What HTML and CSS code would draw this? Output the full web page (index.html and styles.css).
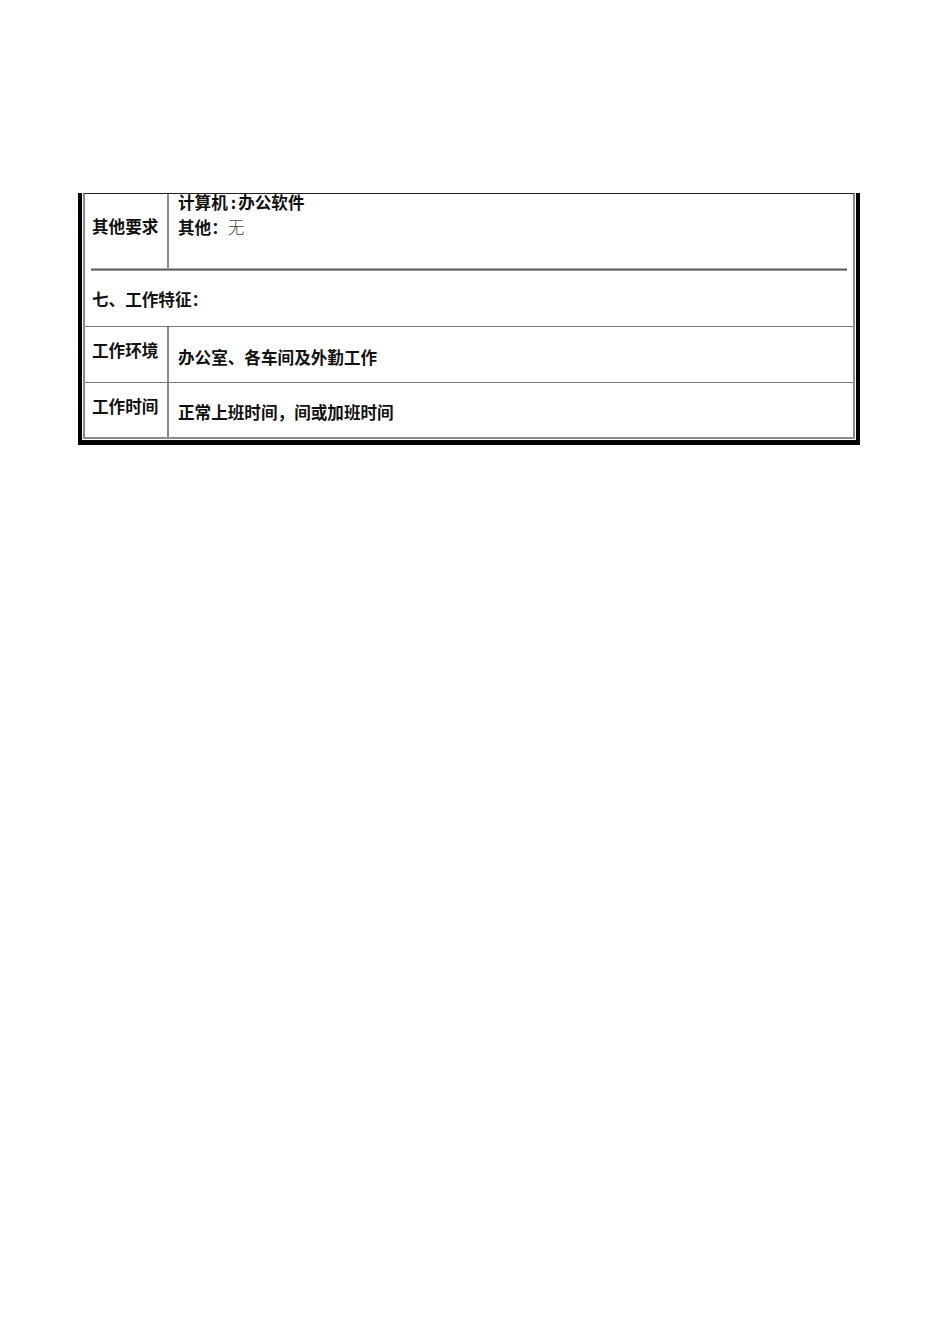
FILE: index.html
```html
<!DOCTYPE html>
<html lang="zh-CN">
<head>
<meta charset="utf-8">
<title>工作特征</title>
<link rel="stylesheet" href="styles.css">
</head>
<body>
<div class="page">
  <div class="frame">
    <div class="inner">
      <div class="row row-req">
        <div class="label label-req">其他要求</div>
        <div class="content content-req">
          <div class="lines">
            <div>计算机<span class="colon">:</span>办公软件</div>
            <div>其他：<span class="light">无</span></div>
          </div>
        </div>
      </div>
      <div class="sep"></div>
      <div class="row row-head">
        <div class="head">七、工作特征：</div>
      </div>
      <div class="row row-item">
        <div class="label">工作环境</div>
        <div class="content">办公室、各车间及外勤工作</div>
      </div>
      <div class="row row-item row-last">
        <div class="label">工作时间</div>
        <div class="content">正常上班时间，间或加班时间</div>
      </div>
    </div>
  </div>
</div>
</body>
</html>
```

FILE: styles.css
```css
html, body {
  margin: 0;
  padding: 0;
  background: #ffffff;
}

body {
  font-family: "Noto Sans CJK SC", "Noto Sans", sans-serif;
  font-size: 16.6px;
  color: #111111;
  font-weight: 600;
}

.page {
  padding-top: 192px;
  padding-left: 78px;
}

.frame {
  width: 772px;
  border-left: 4px solid #000000;
  border-right: 4px solid #000000;
  border-bottom: 5px solid #000000;
  padding: 0 1px 1px 1px;
}

.inner {
  border-top: 1px solid #222222;
  border-left: 2px solid #8a8a8a;
  border-right: 2px solid #8a8a8a;
  border-bottom: 2px solid #8a8a8a;
  margin-top: 1px;
}

.row {
  display: flex;
}

.label {
  width: 84px;
  flex: 0 0 84px;
  box-sizing: border-box;
  padding-left: 7px;
  padding-top: 13px;
  line-height: 20px;
  border-right: 2px solid #8a8a8a;
  white-space: nowrap;
}

.content {
  flex: 1;
  padding-left: 9px;
  display: flex;
  align-items: center;
  padding-top: 4px;
  line-height: 20px;
  white-space: nowrap;
}

.row-req {
  height: 74px;
}

.label-req {
  padding-top: 22px;
}

.content-req {
  align-items: flex-start;
  padding-top: 0;
}

.lines {
  line-height: 25px;
  margin-top: -4px;
}

.colon {
  padding: 0 2px 0 3px;
}

.light {
  font-weight: 300;
  color: #444444;
}

.sep {
  height: 3px;
  margin: 0 6px;
  background: linear-gradient(#a8a8a8 0, #a8a8a8 1px, #5e5e5e 1px, #5e5e5e 2px, #9a9a9a 2px);
}

.row-head {
  height: 55px;
  align-items: center;
  padding-left: 7px;
  border-bottom: 1px solid #777777;
}

.head {
  line-height: 20px;
}

.row-item {
  height: 55px;
  border-bottom: 1px solid #777777;
}

.row-last {
  height: 54px;
  border-bottom: none;
}
```
